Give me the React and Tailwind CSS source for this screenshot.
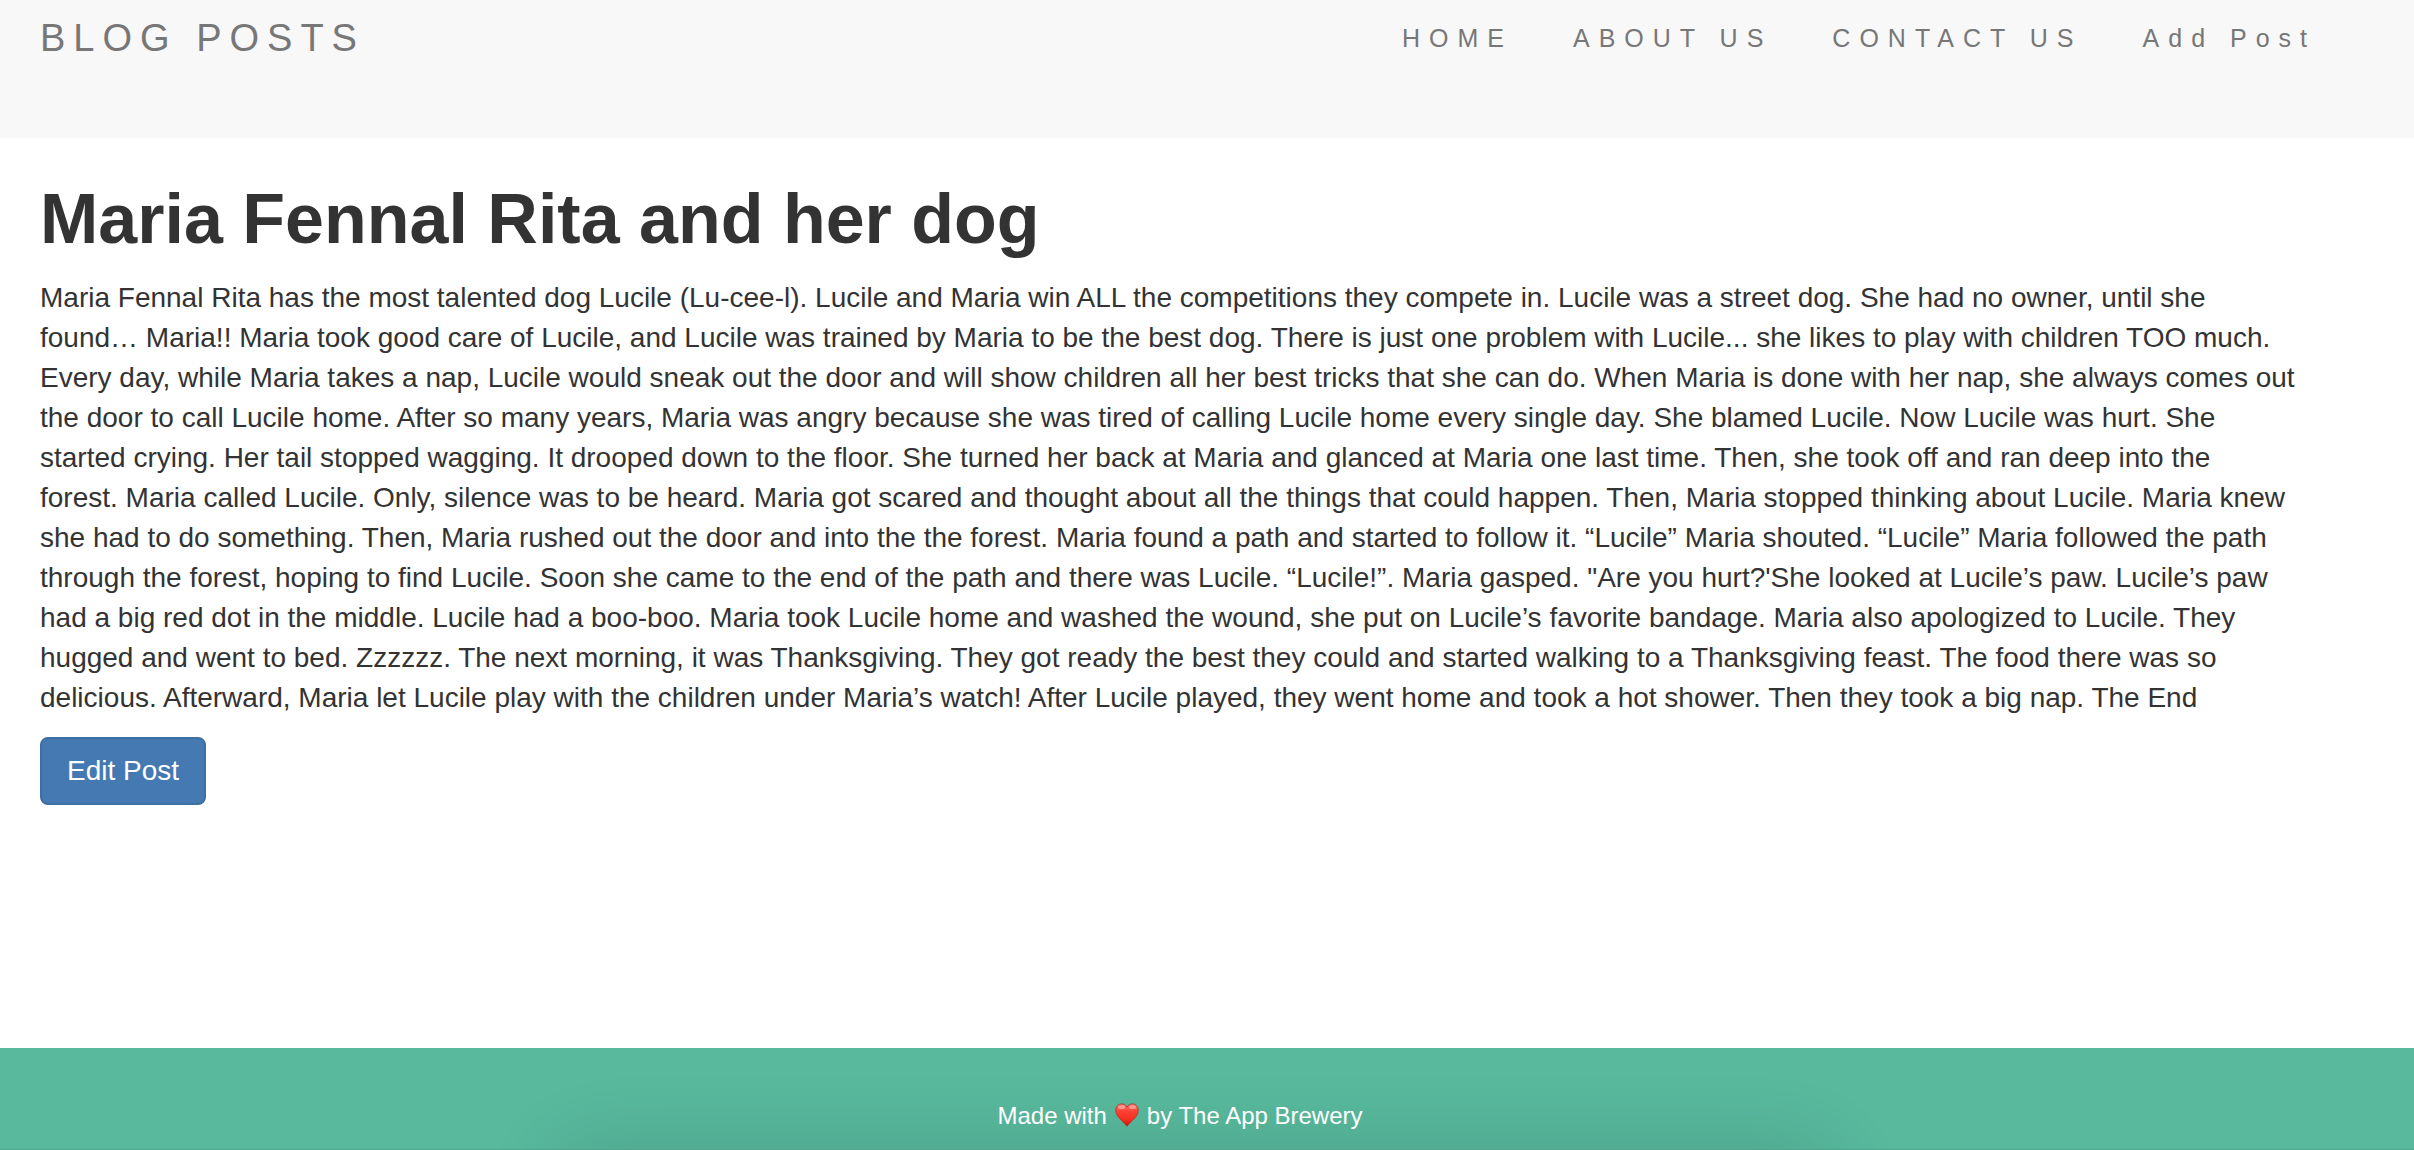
import { Fragment } from "react";

const NAV_LINKS = ["HOME", "ABOUT US", "CONTACT US", "Add Post"];

const POST = {
  title: "Maria Fennal Rita and her dog",
  lines: [
    "Maria Fennal Rita has the most talented dog Lucile (Lu-cee-l). Lucile and Maria win ALL the competitions they compete in. Lucile was a street dog. She had no owner, until she",
    "found… Maria!! Maria took good care of Lucile, and Lucile was trained by Maria to be the best dog. There is just one problem with Lucile... she likes to play with children TOO much.",
    "Every day, while Maria takes a nap, Lucile would sneak out the door and will show children all her best tricks that she can do. When Maria is done with her nap, she always comes out",
    "the door to call Lucile home. After so many years, Maria was angry because she was tired of calling Lucile home every single day. She blamed Lucile. Now Lucile was hurt. She",
    "started crying. Her tail stopped wagging. It drooped down to the floor. She turned her back at Maria and glanced at Maria one last time. Then, she took off and ran deep into the",
    "forest. Maria called Lucile. Only, silence was to be heard. Maria got scared and thought about all the things that could happen. Then, Maria stopped thinking about Lucile. Maria knew",
    "she had to do something. Then, Maria rushed out the door and into the the forest. Maria found a path and started to follow it. “Lucile” Maria shouted. “Lucile” Maria followed the path",
    "through the forest, hoping to find Lucile. Soon she came to the end of the path and there was Lucile. “Lucile!”. Maria gasped. \"Are you hurt?'She looked at Lucile’s paw. Lucile’s paw",
    "had a big red dot in the middle. Lucile had a boo-boo. Maria took Lucile home and washed the wound, she put on Lucile’s favorite bandage. Maria also apologized to Lucile. They",
    "hugged and went to bed. Zzzzzz. The next morning, it was Thanksgiving. They got ready the best they could and started walking to a Thanksgiving feast. The food there was so",
    "delicious. Afterward, Maria let Lucile play with the children under Maria’s watch! After Lucile played, they went home and took a hot shower. Then they took a big nap. The End",
  ],
};

function Navbar() {
  return (
    <header className="flex items-start justify-between bg-[#f8f8f8] pt-[18px] pr-[98px] pb-20 pl-10 text-[#777]">
      <a href="#" className="text-[38px] leading-10 tracking-[8px]">BLOG POSTS</a>
      <nav>
        <ul className="flex gap-15">
          {NAV_LINKS.map((label) => (
            <li key={label} className="text-[25px] leading-10 tracking-[9px]">
              <a href="#">{label}</a>
            </li>
          ))}
        </ul>
      </nav>
    </header>
  );
}

function Heart() {
  return (
    <svg viewBox="0 0 24 24" className="mx-2 inline-block size-6 align-[-3px]" role="img" aria-label="love">
      <defs>
        <linearGradient id="heart-fill" x1="0" y1="0" x2="0" y2="1">
          <stop offset="0" stopColor="#f8786c" />
          <stop offset="0.35" stopColor="#fb3f33" />
          <stop offset="0.7" stopColor="#f3301f" />
          <stop offset="1" stopColor="#c01507" />
        </linearGradient>
      </defs>
      <path
        d="M12 4.2C10.900 2 8.900.9 6.600.9 3.300.9.8 3.500.8 7.100c0 6.400 6.500 10.700 11.200 16.100 4.700-5.400 11.200-9.700 11.200-16.100C23.200 3.500 20.700.9 17.400.9 15.100.9 13.100 2 12 4.200z"
        fill="url(#heart-fill)"
        stroke="#c0281c"
        strokeWidth="0.8"
      />
      <ellipse cx="6.6" cy="4.2" rx="3.6" ry="1.9" fill="#fff" opacity="0.35" />
      <ellipse cx="17.4" cy="4.2" rx="3.6" ry="1.9" fill="#fff" opacity="0.35" />
    </svg>
  );
}

function Footer() {
  return (
    <footer className="relative overflow-hidden border-b border-[#4fa68d] bg-[#58b99d] pt-12 pr-[94px] pb-[13px] pl-10 text-center text-2xl text-white">
      <div className="absolute top-full right-[24%] left-[23%] h-60 rounded-[40px] shadow-[0_0_80px_rgba(0,0,0,0.14)]" />
      <p className="relative leading-10">
        Made with<Heart />by The App Brewery
      </p>
    </footer>
  );
}

export default function App() {
  return (
    <div className="flex min-h-screen flex-col bg-white font-['Liberation_Sans',Arial,sans-serif] text-[#333]">
      <Navbar />
      <main className="flex-1 pt-[41px] pr-[94px] pb-10 pl-10">
        <h1 className="mb-[19px] text-[70px] leading-20 font-bold">{POST.title}</h1>
        <p className="mb-[19px] text-[28px] leading-10">
          {POST.lines.map((line, i) => (
            <Fragment key={i}>
              {line}
              {i < POST.lines.length - 1 && <br />}
            </Fragment>
          ))}
        </p>
        <button type="button" className="rounded-lg border-2 border-[#3f6ea3] bg-[#4479b2] px-[25px] py-3 text-[28px] leading-10 text-white">
          Edit Post
        </button>
      </main>
      <Footer />
    </div>
  );
}
